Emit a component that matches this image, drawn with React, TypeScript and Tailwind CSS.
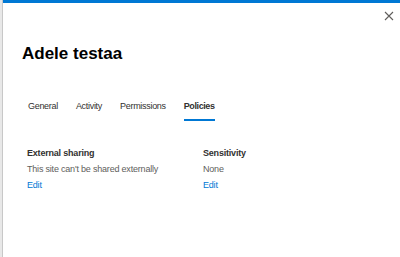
const App = () => {
  return (
    <div className="flex w-[400px] h-[257px] overflow-hidden bg-white" style={{ fontFamily: '"Liberation Sans", Arial, sans-serif' }}>
      {/* page behind the panel */}
      <div className="w-[3px] h-full bg-[#e8e8e8] border-r border-[#c8c8c8]" />
      <div className="flex-1 flex flex-col">
        <div className="h-[3px] bg-[#0078d4]" />
        <div className="flex justify-end pt-[8px] pr-[6px]">
          <svg width="10" height="10" viewBox="0 0 10 10" className="text-[#605e5c]">
            <path d="M1 1 L9 9 M9 1 L1 9" stroke="currentColor" strokeWidth="1.1" />
          </svg>
        </div>
        <h1 className="pl-[19px] mt-[22px] text-[17px] leading-[22px] font-bold text-black">Adele testaa</h1>
        <div className="flex gap-[18px] pl-[25px] mt-[35px] text-[9px] tracking-[-0.3px] text-[#323130]">
          <div className="pb-[7px]">General</div>
          <div className="pb-[7px]">Activity</div>
          <div className="pb-[7px]">Permissions</div>
          <div className="pb-[5px] font-bold tracking-[-0.4px] border-b-2 border-[#0078d4]">Policies</div>
        </div>
        <div className="grid grid-cols-[176px_1fr] pl-[24px] mt-[24px] text-[9px] tracking-[-0.2px] leading-[16px]">
          <div className="flex flex-col">
            <span className="font-bold text-[#323130]">External sharing</span>
            <span className="text-[#605e5c]">This site can't be shared externally</span>
            <span className="text-[#0078d4]">Edit</span>
          </div>
          <div className="flex flex-col">
            <span className="font-bold text-[#323130]">Sensitivity</span>
            <span className="text-[#605e5c]">None</span>
            <span className="text-[#0078d4]">Edit</span>
          </div>
        </div>
      </div>
    </div>
  );
};

export default App;
